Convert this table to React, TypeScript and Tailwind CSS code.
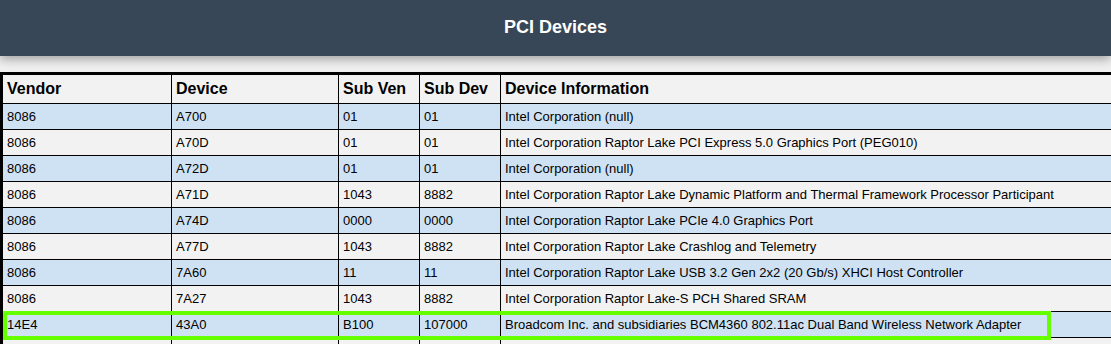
import React from 'react';

interface PciDevice {
  vendor: string;
  device: string;
  subVen: string;
  subDev: string;
  info: string;
}

const DEVICES: PciDevice[] = [
  { vendor: '8086', device: 'A700', subVen: '01', subDev: '01', info: 'Intel Corporation (null)' },
  { vendor: '8086', device: 'A70D', subVen: '01', subDev: '01', info: 'Intel Corporation Raptor Lake PCI Express 5.0 Graphics Port (PEG010)' },
  { vendor: '8086', device: 'A72D', subVen: '01', subDev: '01', info: 'Intel Corporation (null)' },
  { vendor: '8086', device: 'A71D', subVen: '1043', subDev: '8882', info: 'Intel Corporation Raptor Lake Dynamic Platform and Thermal Framework Processor Participant' },
  { vendor: '8086', device: 'A74D', subVen: '0000', subDev: '0000', info: 'Intel Corporation Raptor Lake PCIe 4.0 Graphics Port' },
  { vendor: '8086', device: 'A77D', subVen: '1043', subDev: '8882', info: 'Intel Corporation Raptor Lake Crashlog and Telemetry' },
  { vendor: '8086', device: '7A60', subVen: '11', subDev: '11', info: 'Intel Corporation Raptor Lake USB 3.2 Gen 2x2 (20 Gb/s) XHCI Host Controller' },
  { vendor: '8086', device: '7A27', subVen: '1043', subDev: '8882', info: 'Intel Corporation Raptor Lake-S PCH Shared SRAM' },
  { vendor: '14E4', device: '43A0', subVen: 'B100', subDev: '107000', info: 'Broadcom Inc. and subsidiaries BCM4360 802.11ac Dual Band Wireless Network Adapter' },
];

const HEAD_CELL = 'h-[30px] border border-black px-[4px] text-left align-middle text-[16px] font-bold';
const BODY_CELL = 'h-[26px] border border-black px-[4px] align-middle text-[13px] leading-[15px]';

export default function App() {
  return (
    <div className="min-h-screen overflow-hidden bg-[#f0f0f0] font-['Liberation_Sans',Arial,sans-serif] text-black">
      <header className="flex h-[56px] items-center justify-center bg-[#374757] shadow-[0_3px_10px_rgba(0,0,0,0.35)]">
        <h1 className="-mt-[2px] text-[18px] font-bold text-white">PCI Devices</h1>
      </header>

      <div className="relative mt-[16px]">
        <table className="w-[1140px] table-fixed border-collapse border-l-[3px] border-t-[3px] border-black">
          <colgroup>
            <col className="w-[170px]" />
            <col className="w-[167px]" />
            <col className="w-[81px]" />
            <col className="w-[81px]" />
            <col />
          </colgroup>
          <thead>
            <tr className="bg-[#f2f2f2]">
              <th className={HEAD_CELL}>Vendor</th>
              <th className={HEAD_CELL}>Device</th>
              <th className={HEAD_CELL}>Sub Ven</th>
              <th className={HEAD_CELL}>Sub Dev</th>
              <th className={HEAD_CELL}>Device Information</th>
            </tr>
          </thead>
          <tbody>
            {DEVICES.map((d, i) => (
              <tr key={d.device} className={i % 2 === 0 ? 'bg-[#cfe2f3]' : 'bg-[#f2f2f2]'}>
                <td className={BODY_CELL}>{d.vendor}</td>
                <td className={BODY_CELL}>{d.device}</td>
                <td className={BODY_CELL}>{d.subVen}</td>
                <td className={BODY_CELL}>{d.subDev}</td>
                <td className={BODY_CELL}>{d.info}</td>
              </tr>
            ))}
            {/* next row starts just below the fold */}
            <tr className="bg-[#f2f2f2]">
              <td className={BODY_CELL} />
              <td className={BODY_CELL} />
              <td className={BODY_CELL} />
              <td className={BODY_CELL} />
              <td className={BODY_CELL} />
            </tr>
          </tbody>
        </table>

        {/* highlight annotation around the Broadcom row */}
        <div className="pointer-events-none absolute left-[3px] top-[239px] h-[29px] w-[1048px] border-4 border-[#66ff00]" />
      </div>
    </div>
  );
}
